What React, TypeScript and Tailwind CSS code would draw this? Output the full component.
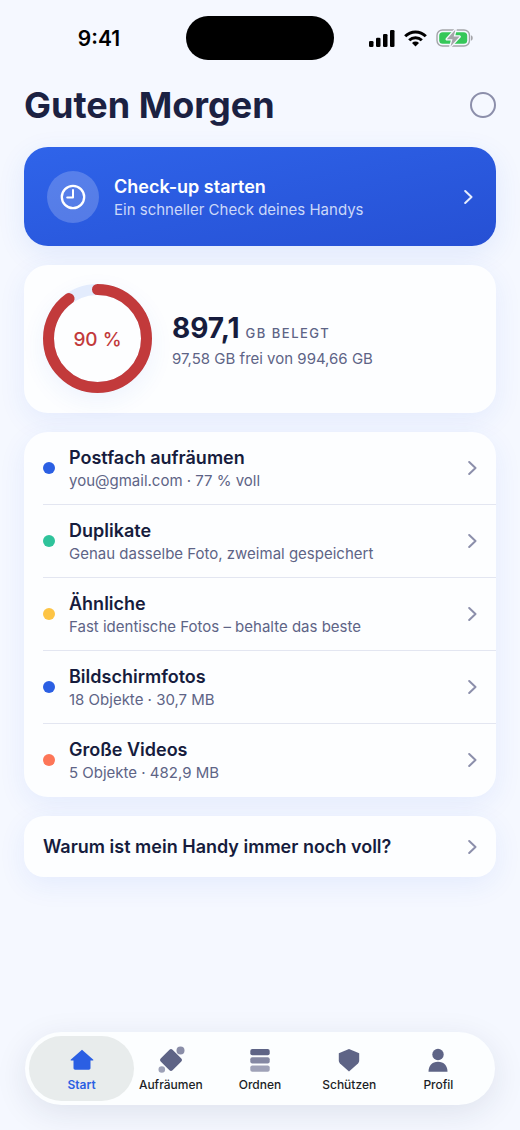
import type { ReactNode } from "react";
import clsx from "clsx";

const categories = [
  { title: "Postfach aufräumen", detail: "you@gmail.com · 77 % voll", dot: "bg-[#2b5fe3]" },
  { title: "Duplikate", detail: "Genau dasselbe Foto, zweimal gespeichert", dot: "bg-[#2fc39b]" },
  { title: "Ähnliche", detail: "Fast identische Fotos – behalte das beste", dot: "bg-[#fdc445]" },
  { title: "Bildschirmfotos", detail: "18 Objekte · 30,7 MB", dot: "bg-[#2b5fe3]" },
  { title: "Große Videos", detail: "5 Objekte · 482,9 MB", dot: "bg-[#fd7658]" },
];

const tabs: { label: string; icon: ReactNode }[] = [
  {
    label: "Start",
    icon: (
      <path
        d="M13 2.700 1.900 12.400c-.5.5-.3 1 .4 1H4.500v7.600c0 1.100.7 1.700 1.700 1.700h13.600c1 0 1.700-.6 1.700-1.700v-7.600h2.200c.7 0 .9-.5.4-1Z"
        fill="#2b5fe3"
      />
    ),
  },
  {
    label: "Aufräumen",
    icon: (
      <>
        <rect x="4.600" y="4.600" width="16.800" height="16.800" rx="2.200" transform="rotate(45 13 13)" fill="#5e6486" />
        <circle cx="22.500" cy="3.500" r="4" fill="#8a8ea8" />
        <circle cx="3.800" cy="22.500" r="3.300" fill="#9da1b7" />
      </>
    ),
  },
  {
    label: "Ordnen",
    icon: (
      <>
        <rect x="3.300" y="2" width="19.400" height="6.200" rx="2" fill="#5e6486" />
        <rect x="3.300" y="10.200" width="19.400" height="6.200" rx="2" fill="#8488a3" />
        <rect x="3.300" y="18.500" width="19.400" height="6.200" rx="2" fill="#9fa2b8" />
      </>
    ),
  },
  {
    label: "Schützen",
    icon: <path d="m13 2 10.200 4.200v7.400c0 1.200-.4 2-1.200 2.900l-9 8-9-8c-.8-.9-1.200-1.700-1.200-2.900V6.200Z" fill="#5e6486" />,
  },
  {
    label: "Profil",
    icon: (
      <>
        <circle cx="13" cy="7.500" r="5.700" fill="#5e6486" />
        <path d="M3.500 24.700c0-6 3.500-10 9.500-10s9.500 4 9.500 10Z" fill="#5e6486" />
      </>
    ),
  },
];

function Chevron({ className }: { className: string }) {
  return (
    <svg
      viewBox="0 0 9 16"
      className={clsx("h-4 w-[9px] shrink-0", className)}
      fill="none"
      stroke="currentColor"
      strokeWidth="2"
      strokeLinecap="round"
      strokeLinejoin="round"
      aria-hidden="true"
    >
      <path d="m1.200 2 6.300 6-6.300 6" />
    </svg>
  );
}

function StatusBar() {
  return (
    <div className="flex h-[76px] items-center text-black">
      <div className="flex-1 pt-0.5 pl-3 text-center text-[21px] font-semibold">9:41</div>
      <div className="h-11 w-[148px] rounded-full bg-black" />
      <div className="flex flex-1 items-center justify-center gap-[9px] pr-3">
        <svg viewBox="0 0 26 17" className="h-[17px] w-[26px]" aria-hidden="true">
          <rect x="0" y="11" width="4.500" height="6" rx="1.300" />
          <rect x="7" y="7.800" width="4.500" height="9.200" rx="1.300" />
          <rect x="14" y="4" width="4.500" height="13" rx="1.300" />
          <rect x="21" y="0" width="4.500" height="17" rx="1.300" />
        </svg>
        <svg viewBox="0 0 23 17" className="h-[17px] w-[23px]" fill="none" stroke="black" strokeWidth="3" aria-hidden="true">
          <path d="M1.200 6.200a14.600 14.600 0 0 1 20.600 0" />
          <path d="M5.200 10.200a9 9 0 0 1 12.600 0" />
          <path d="M11.500 16.500 8 13a5 5 0 0 1 7 0Z" fill="black" stroke="none" />
        </svg>
        <svg viewBox="0 0 37 20" className="h-5 w-[37px]" aria-hidden="true">
          <rect x="1" y="2" width="32.500" height="16" rx="5.500" fill="none" stroke="#a4a5a9" strokeWidth="1.400" />
          <rect x="3.200" y="4.200" width="28" height="11.600" rx="3.500" fill="#35c759" />
          <path d="M35 7.300c2.300.8 2.300 4.600 0 5.400Z" fill="#a4a5a9" />
          <path
            d="M19.500 1.500 10.800 11.200h5.700l-2 7.200 9.100-9.800h-5.900Z"
            fill="#a4a5a9"
            stroke="#f6f8ff"
            strokeWidth="2.600"
            strokeLinejoin="round"
            paintOrder="stroke"
          />
        </svg>
      </div>
    </div>
  );
}

function StorageRing({ percent }: { percent: number }) {
  const length = 2 * Math.PI * 49;

  return (
    <div className="relative size-[109px] shrink-0 rounded-full shadow-[0_8px_24px_rgba(43,95,227,0.07)]">
      <svg viewBox="0 0 109 109" className="size-full -rotate-90" fill="none" strokeWidth="11" aria-hidden="true">
        <circle cx="54.500" cy="54.500" r="49" stroke="#e3ecfd" />
        <circle
          cx="54.500"
          cy="54.500"
          r="49"
          stroke="#c23a3b"
          strokeLinecap="round"
          strokeDasharray={`${(length * percent) / 100} ${length}`}
        />
      </svg>
      <span className="absolute inset-0 flex items-center justify-center pt-1 text-[19px] font-medium text-[#c23a3b]">
        {percent} %
      </span>
    </div>
  );
}

export default function App() {
  return (
    <div className="flex min-h-screen flex-col bg-[#f5f8ff] font-['Inter',sans-serif] text-[#161c3d]">
      <StatusBar />

      <main className="flex flex-col gap-[19px] px-6">
        <header className="flex h-[52px] items-center justify-between pt-1.5">
          <h1 className="text-4xl leading-[46px] font-bold text-[#1b2142]">Guten Morgen</h1>
          <button aria-label="Status" className="size-[26px] rounded-full border-2 border-[#8c8fab]" />
        </header>

        <button className="flex h-[99px] items-center rounded-[24px] bg-linear-to-br from-[#2f64ea] to-[#2650d4] px-[23px] text-left text-white shadow-[0_8px_28px_rgba(43,95,227,0.10)]">
          <span className="flex size-[52px] shrink-0 items-center justify-center rounded-full bg-white/20">
            <svg viewBox="0 0 26 26" className="size-[26px]" fill="none" stroke="white" strokeWidth="2" strokeLinecap="round" aria-hidden="true">
              <circle cx="13" cy="13" r="11.200" strokeWidth="2.300" />
              <path d="M13 6v7.500H7.200" strokeLinejoin="round" />
            </svg>
          </span>
          <span className="ml-[15px] flex-1 pt-0.5">
            <span className="block text-lg leading-6 font-semibold">Check-up starten</span>
            <span className="block text-[15px] leading-[22px] text-[#cbd8f9]">Ein schneller Check deines Handys</span>
          </span>
          <Chevron className="text-[#e6edfd]" />
        </button>

        <section className="flex h-[148px] items-center gap-5 rounded-[24px] bg-[#fdfeff] px-[19px] pb-0.5 shadow-[0_8px_28px_rgba(43,95,227,0.08)]">
          <StorageRing percent={90} />
          <div className="pt-2 pb-0.5">
            <p className="flex items-baseline gap-1.5 leading-[30px]">
              <span className="text-[28px] font-bold">897,1</span>
              <span className="text-[13px] font-medium tracking-[1.500px] text-[#5e6486]">GB BELEGT</span>
            </p>
            <p className="text-[15px] leading-[22px] text-[#5e6486]">97,58 GB frei von 994,66 GB</p>
          </div>
        </section>

        <ul className="rounded-[24px] bg-[#fdfeff] pb-px pl-[19px] shadow-[0_8px_28px_rgba(43,95,227,0.08)]">
          {categories.map((category) => (
            <li key={category.title} className="border-b border-[#e3e6f1] last:border-b-0">
              <button className="flex h-[72px] w-full items-center pr-[19px] text-left">
                <span className={clsx("size-3 shrink-0 rounded-full", category.dot)} />
                <span className="ml-3.5 flex-1 pt-0.5">
                  <span className="block text-lg leading-6 font-semibold">{category.title}</span>
                  <span className="block text-[15px] leading-[22px] text-[#5e6486]">{category.detail}</span>
                </span>
                <Chevron className="text-[#8c8fab]" />
              </button>
            </li>
          ))}
        </ul>

        <button className="flex h-[61px] items-center justify-between rounded-[20px] bg-[#fdfeff] px-[19px] text-left text-lg font-semibold shadow-[0_8px_28px_rgba(43,95,227,0.08)]">
          Warum ist mein Handy immer noch voll?
          <Chevron className="text-[#8c8fab]" />
        </button>
      </main>

      <nav className="mx-[25px] mt-auto mb-[25px] grid h-[73px] grid-cols-5 rounded-full bg-[#fcfeff] px-3 py-1 shadow-[0_8px_32px_rgba(30,40,80,0.10)]">
        {tabs.map((tab, i) => (
          <button
            key={tab.label}
            className={clsx(
              "-mx-2 flex flex-col items-center justify-center gap-1 rounded-full pt-0.5 text-xs",
              i === 0 ? "bg-[#e8ecec] font-semibold text-[#2b5fe3]" : "font-medium text-[#1c1e26]"
            )}
          >
            <svg viewBox="0 0 26 26" className="size-[26px] overflow-visible" aria-hidden="true">
              {tab.icon}
            </svg>
            {tab.label}
          </button>
        ))}
      </nav>
    </div>
  );
}
